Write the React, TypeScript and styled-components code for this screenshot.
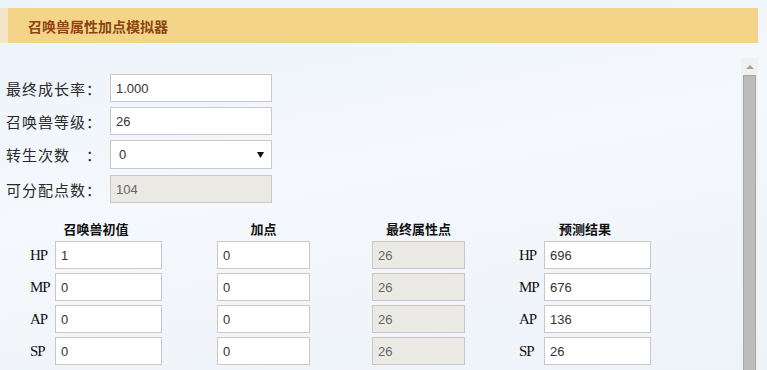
import styled, { createGlobalStyle } from 'styled-components';

const GlobalStyle = createGlobalStyle`
  html, body {
    margin: 0;
    padding: 0;
    overflow: hidden;
  }
  body {
    background: linear-gradient(170deg, #ecf3fc 0%, #f5f8fc 45%, #eef3f9 100%);
    font-family: "Noto Sans CJK SC", "Noto Sans", sans-serif;
    color: #333;
  }
`;

const Page = styled.div`
  padding-top: 8px;
  height: 370px;
  box-sizing: border-box;
  display: flex;
  flex-direction: column;
`;

const TitleBar = styled.div`
  flex: none;
  height: 35px;
  margin-right: 9px;
  display: flex;
  align-items: center;
  padding-left: 20px;
  background: #f4d488;
  border-left: 8px solid #f3e6c9;
  font-size: 14px;
  font-weight: bold;
  color: #8b4513;
`;

const ScrollPanel = styled.div`
  margin-top: 15px;
  width: 758px;
  flex: 1;
  min-height: 0;
  display: flex;
`;

const Content = styled.div`
  flex: 1;
  overflow: hidden;
  padding: 16px 0 0 6px;
`;

const ScrollBar = styled.div`
  width: 17px;
  flex: none;
  background: #f1f1f1;
  display: flex;
  flex-direction: column;
`;

const ScrollButton = styled.div`
  height: 17px;
  display: flex;
  justify-content: center;
  align-items: center;

  svg {
    display: block;
  }
`;

const ScrollThumb = styled.div`
  flex: 1;
  margin: 0 2px;
  background: #bcbcbc;
  border: 1px solid #a6a6a6;
  border-bottom: 0;
`;

const Form = styled.div`
  display: flex;
  flex-direction: column;
  gap: 5px;
`;

const FormRow = styled.div<{ $gapAfter?: number }>`
  display: flex;
  align-items: center;
  margin-bottom: ${(p) => p.$gapAfter ?? 0}px;
`;

const Label = styled.label`
  width: 104px;
  font-size: 15px;
  letter-spacing: 1px;
  color: #2a2a2a;
  white-space: pre;
`;

const TextBox = styled.input<{ $w?: number }>`
  box-sizing: border-box;
  width: ${(p) => p.$w ?? 162}px;
  height: 28px;
  border: 1px solid #c8c8c8;
  background: #fff;
  padding: 0 5px;
  font-family: "Liberation Sans", Arial, sans-serif;
  font-size: 13px;
  color: #333;
  outline: none;

  &:read-only {
    background: #ebe9e3;
    color: #666;
  }
`;

const SelectWrap = styled.div`
  position: relative;
  width: 162px;

  svg {
    position: absolute;
    right: 8px;
    top: 12px;
    pointer-events: none;
  }
`;

const Select = styled.select`
  appearance: none;
  box-sizing: border-box;
  width: 162px;
  height: 29px;
  border: 1px solid #c8c8c8;
  background: #fff;
  padding: 0 8px;
  font-family: "Liberation Sans", Arial, sans-serif;
  font-size: 13px;
  color: #333;
  outline: none;
  border-radius: 0;
`;

const Table = styled.div`
  margin: 17px 0 0 6px;
  display: grid;
  grid-template-columns: 168px 167px 143px 190px;
  row-gap: 4px;
  justify-items: center;
  align-items: center;
`;

const Head = styled.div`
  height: 17px;
  font-size: 13px;
  font-weight: bold;
  color: #111;
  line-height: 17px;
`;

const Cell = styled.div`
  display: flex;
  align-items: center;
`;

const Stat = styled.span`
  width: 25px;
  font-family: "Liberation Serif", "Times New Roman", serif;
  font-size: 15px;
  letter-spacing: -1px;
  color: #111;
`;

const stats = ['HP', 'MP', 'AP', 'SP'];
const base = ['1', '0', '0', '0'];
const result = ['696', '676', '136', '26'];

const App = () => {
  return (
    <Page>
      <GlobalStyle />
      <TitleBar>召唤兽属性加点模拟器</TitleBar>
      <ScrollPanel>
        <Content>
          <Form>
            <FormRow>
              <Label>最终成长率：</Label>
              <TextBox defaultValue="1.000" />
            </FormRow>
            <FormRow>
              <Label>召唤兽等级：</Label>
              <TextBox defaultValue="26" />
            </FormRow>
            <FormRow $gapAfter={1}>
              <Label>{'转生次数　：'}</Label>
              <SelectWrap>
                <Select defaultValue="0">
                  <option value="0">0</option>
                  <option value="1">1</option>
                  <option value="2">2</option>
                  <option value="3">3</option>
                </Select>
                <svg width="7" height="6" viewBox="0 0 7 6">
                  <path d="M0 0 L7 0 L3.5 6 Z" fill="#111" />
                </svg>
              </SelectWrap>
            </FormRow>
            <FormRow>
              <Label>可分配点数：</Label>
              <TextBox defaultValue="104" readOnly />
            </FormRow>
          </Form>

          <Table>
            <Head>召唤兽初值</Head>
            <Head>加点</Head>
            <Head>最终属性点</Head>
            <Head>预测结果</Head>
            {stats.map((s, i) => [
              <Cell key={s + 'a'}>
                <Stat>{s}</Stat>
                <TextBox $w={107} defaultValue={base[i]} />
              </Cell>,
              <Cell key={s + 'b'}>
                <TextBox $w={93} defaultValue="0" />
              </Cell>,
              <Cell key={s + 'c'}>
                <TextBox $w={93} defaultValue="26" readOnly />
              </Cell>,
              <Cell key={s + 'd'}>
                <Stat>{s}</Stat>
                <TextBox $w={107} defaultValue={result[i]} />
              </Cell>,
            ])}
          </Table>
        </Content>
        <ScrollBar>
          <ScrollButton>
            <svg width="8" height="4" viewBox="0 0 8 4">
              <path d="M0 4 L4 0 L8 4 Z" fill="#a3a3a3" />
            </svg>
          </ScrollButton>
          <ScrollThumb />
        </ScrollBar>
      </ScrollPanel>
    </Page>
  );
};

export default App;
